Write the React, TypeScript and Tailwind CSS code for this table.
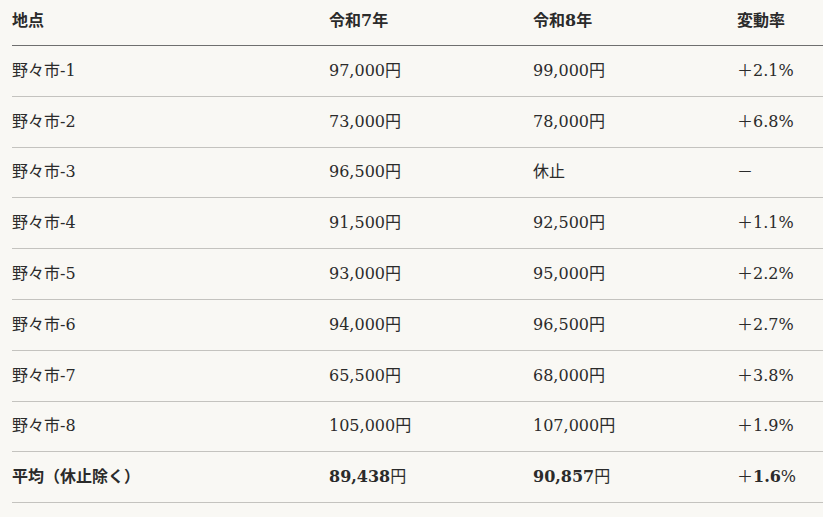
import React from 'react'

type Row = {
  place: string
  r7: string
  r8: string
  rate: string
}

const rows: Row[] = [
  { place: '野々市-1', r7: '97,000円', r8: '99,000円', rate: '＋2.1%' },
  { place: '野々市-2', r7: '73,000円', r8: '78,000円', rate: '＋6.8%' },
  { place: '野々市-3', r7: '96,500円', r8: '休止', rate: '－' },
  { place: '野々市-4', r7: '91,500円', r8: '92,500円', rate: '＋1.1%' },
  { place: '野々市-5', r7: '93,000円', r8: '95,000円', rate: '＋2.2%' },
  { place: '野々市-6', r7: '94,000円', r8: '96,500円', rate: '＋2.7%' },
  { place: '野々市-7', r7: '65,500円', r8: '68,000円', rate: '＋3.8%' },
  { place: '野々市-8', r7: '105,000円', r8: '107,000円', rate: '＋1.9%' },
]

const grid = 'grid grid-cols-[317px_204px_204px_1fr] items-center'

export default function App() {
  return (
    <div
      className="min-h-[517px] w-[823px] bg-[#f9f8f4] pl-[12px] text-[16px] text-[#2b2b2b]"
      style={{ fontFamily: '"DejaVu Serif", "Noto Sans CJK JP", serif' }}
    >
      <div className={`${grid} h-[46px] border-b border-[#6f6f6f] pb-[4px] font-bold`}>
        <div>地点</div>
        <div>令和7年</div>
        <div>令和8年</div>
        <div>変動率</div>
      </div>

      {rows.map((r) => (
        <div key={r.place} className={`${grid} h-[50.8px] border-b border-[#c4c3bf]`}>
          <div>{r.place}</div>
          <div>{r.r7}</div>
          <div>{r.r8}</div>
          <div>{r.rate}</div>
        </div>
      ))}

      {/* average row: only the figures are bold */}
      <div className={`${grid} h-[50.8px] border-b border-[#c4c3bf]`}>
        <div className="font-bold">平均（休止除く）</div>
        <div>
          <strong>89,438</strong>円
        </div>
        <div>
          <strong>90,857</strong>円
        </div>
        <div>
          ＋<strong>1.6</strong>%
        </div>
      </div>
    </div>
  )
}
